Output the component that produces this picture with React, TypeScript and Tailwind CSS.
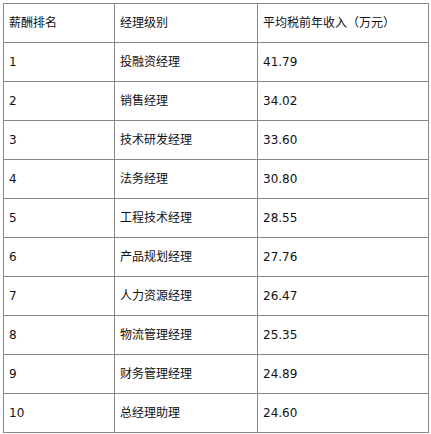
import React from "react";

const rows: [string, string, string][] = [
  ["1", "投融资经理", "41.79"],
  ["2", "销售经理", "34.02"],
  ["3", "技术研发经理", "33.60"],
  ["4", "法务经理", "30.80"],
  ["5", "工程技术经理", "28.55"],
  ["6", "产品规划经理", "27.76"],
  ["7", "人力资源经理", "26.47"],
  ["8", "物流管理经理", "25.35"],
  ["9", "财务管理经理", "24.89"],
  ["10", "总经理助理", "24.60"],
];

const font = { fontFamily: '"DejaVu Sans", "Noto Sans CJK SC", sans-serif' };

export default function App() {
  return (
    <div className="w-[431px] h-[434px] bg-white pt-[3px] pl-[3px]">
      <table
        className="border-collapse table-fixed w-[425px] text-[12px] text-[#111]"
        style={font}
      >
        <colgroup>
          <col className="w-[111px]" />
          <col className="w-[143px]" />
          <col className="w-[171px]" />
        </colgroup>
        <tbody>
          <tr className="h-[39px]">
            <td className="border border-[#888] pl-[5px] align-middle">薪酬排名</td>
            <td className="border border-[#888] pl-[5px] align-middle">经理级别</td>
            <td className="border border-[#888] pl-[5px] align-middle">平均税前年收入（万元）</td>
          </tr>
          {rows.map((r) => (
            <tr key={r[0]} className="h-[39px]">
              <td className="border border-[#888] pl-[5px] align-middle">{r[0]}</td>
              <td className="border border-[#888] pl-[5px] align-middle">{r[1]}</td>
              <td className="border border-[#888] pl-[5px] align-middle">{r[2]}</td>
            </tr>
          ))}
        </tbody>
      </table>
    </div>
  );
}
